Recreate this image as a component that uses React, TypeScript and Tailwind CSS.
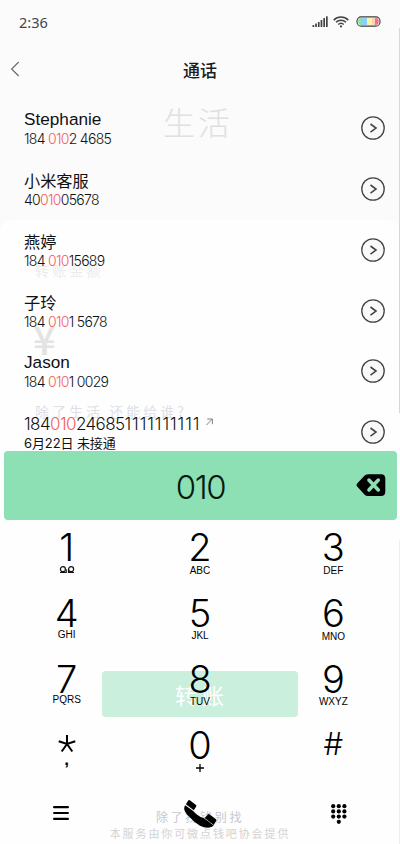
import type { ReactNode } from "react";

type Contact = {
  name: string;
  latin?: boolean;
  before: string;
  after: string;
};

const contacts: Contact[] = [
  { name: "Stephanie", latin: true, before: "184 ", after: "2 4685" },
  { name: "小米客服", before: "40", after: "05678" },
  { name: "燕婷", before: "184 ", after: "15689" },
  { name: "子玲", before: "184 ", after: "1 5678" },
  { name: "Jason", latin: true, before: "184 ", after: "1 0029" },
];

const digitFont = "font-['Inter','Noto_Sans_CJK_SC',sans-serif]";

function StatusBar() {
  return (
    <div className="flex h-11 items-center justify-between pl-[19px] pr-[19px]">
      <span className="font-['Noto_Sans',sans-serif] text-[14.5px] leading-5 text-[#444]">2:36</span>
      <div className="flex items-center">
        <svg width="16" height="12" viewBox="0 0 16 12" fill="#444">
          <rect x="0.5" y="9" width="1.7" height="2" />
          <rect x="3.2" y="7.5" width="1.7" height="3.5" />
          <rect x="5.9" y="6" width="1.7" height="5" />
          <rect x="8.6" y="4" width="1.7" height="7" />
          <rect x="11.3" y="2" width="1.7" height="9" />
          <rect x="14" y="0.3" width="1.7" height="10.7" />
        </svg>
        <svg className="ml-[5px]" width="16" height="12" viewBox="0 0 16 12" fill="none" stroke="#444" strokeWidth="1.5">
          <path d="M0.7 4.1C4.8 0.1 11.2 0.1 15.3 4.1" />
          <path d="M3 6.3c2.8-2.7 7.2-2.7 10 0" />
          <path d="M5.2 8.5c1.6-1.5 4-1.5 5.6 0" />
          <circle cx="8" cy="10.4" r="1.1" fill="#444" stroke="none" />
        </svg>
        <svg className="-mt-px ml-[7px]" width="25" height="11" viewBox="0 0 25 11">
          <defs>
            <clipPath id="cell">
              <rect x="2.2" y="2" width="20.5" height="7" rx="3" />
            </clipPath>
          </defs>
          <g clipPath="url(#cell)">
            <rect x="1" width="5" height="11" fill="#7fe89b" />
            <rect x="6" width="5" height="11" fill="#8fcdf5" />
            <rect x="11" width="5" height="11" fill="#f8f3ae" />
            <rect x="16" width="3" height="11" fill="#f9d6b8" />
            <rect x="19" width="5" height="11" fill="#f4718b" />
          </g>
          <rect x="1" y="0.9" width="23" height="9.2" rx="4.2" fill="none" stroke="#3c3c3c" strokeWidth="1.1" />
        </svg>
      </div>
    </div>
  );
}

function Header() {
  return (
    <div className="grid h-[54px] grid-cols-[40px_1fr_40px] items-center">
      <svg className="-mt-1 ml-2.5" width="10" height="16" viewBox="0 0 10 16" fill="none" stroke="#666" strokeWidth="1.1">
        <path d="M8.7 1 1.6 8l7.1 7" />
      </svg>
      <h1 className="-mt-0.5 text-center font-['Noto_Sans_CJK_SC',sans-serif] text-[17px] font-medium leading-6 text-[#1c1c1c]">通话</h1>
    </div>
  );
}

function MoreButton() {
  return (
    <button type="button" className="shrink-0">
      <svg width="24" height="24" viewBox="0 0 24 24" fill="none" stroke="#444">
        <circle cx="12" cy="12" r="11.2" strokeWidth="1.3" fill="#f9f9f9" />
        <path d="M9.5 8 15 12.1l-5.5 4.1" strokeWidth="1.6" />
      </svg>
    </button>
  );
}

function ContactRow({ name, latin, before, after }: Contact) {
  return (
    <div className="flex h-[60.75px] items-center justify-between pl-6 pr-[15px]">
      <div className="pt-0.5 text-[#111]">
        {latin ? (
          <p className="font-['Liberation_Sans',sans-serif] text-[17.2px] leading-5">{name}</p>
        ) : (
          <p className="font-['Noto_Sans_CJK_SC',sans-serif] text-[16.2px] leading-5">{name}</p>
        )}
        <p className={`${digitFont} whitespace-pre text-[14px] font-[350] leading-5 tracking-[-0.7px]`}>
          {before}
          <span className="text-[#f25f5f]">010</span>
          {after}
        </p>
      </div>
      <MoreButton />
    </div>
  );
}

function MissedRow() {
  return (
    <div className="flex h-[49px] items-start justify-between pl-6 pr-[15px] pt-3">
      <div className="text-[#111]">
        <p className={`${digitFont} flex text-[17px] font-[350] leading-5 tracking-[-0.6px]`}>
          184<span className="text-[#f25f5f]">010</span>24685<span className="tracking-[0.9px]">1111111111</span>
          <svg className="ml-1.5 mt-1" width="7" height="8" viewBox="0 0 7 8" fill="none" stroke="#777" strokeWidth="0.9">
            <path d="M0.5 7 6.3 1M1.2 1h5.2v5.2" />
          </svg>
        </p>
        <p className={`${digitFont} text-[13px] leading-[18px] tracking-[-0.1px]`}>6月22日 未接通</p>
      </div>
      <div className="pt-1.5">
        <MoreButton />
      </div>
    </div>
  );
}

function DialDisplay() {
  return (
    <div className="ml-1 mr-[3px] grid h-[69px] grid-cols-[60px_1fr_60px] items-center rounded-[4px] bg-[#8ce0b4]">
      <span />
      <span className={`${digitFont} pt-[3px] text-center text-[33px] font-light leading-10 tracking-[-1.5px] text-[#061a0e]`}>010</span>
      <svg className="ml-[19px]" width="30" height="24" viewBox="0 0 30 24">
        <path d="M1.2 10.5 8.4 2.7Q9.8 1.2 12 1.2h13q4.3 0 4.3 4.3v13q0 4.5-4.3 4.5H12q-2.2 0-3.6-1.5L1.2 13.5q-1.4-1.5 0-3z" fill="#000" />
        <path d="m12.9 7 9.4 10M22.3 7l-9.4 10" stroke="#8ce0b4" strokeWidth="3.5" strokeLinecap="round" />
      </svg>
    </div>
  );
}

function Key({ digit, children }: { digit: string; children: ReactNode }) {
  return (
    <button type="button" className="flex h-[66px] flex-col items-center pt-[7px] text-black">
      <span className={`${digitFont} text-[38px] font-light leading-10`}>{digit}</span>
      {children}
    </button>
  );
}

function Letters({ className, children }: { className: string; children: string }) {
  return <span className={`font-['Liberation_Sans',sans-serif] text-[10px] leading-3 ${className}`}>{children}</span>;
}

function Keypad() {
  return (
    <div className="grid grid-cols-3">
      <Key digit="1">
        <svg className="-mt-[1px]" width="16" height="8" viewBox="0 0 16 8" fill="none" stroke="#111" strokeWidth="1.2">
          <circle cx="3.9" cy="3.2" r="2.5" />
          <circle cx="12.1" cy="3.2" r="2.5" />
          <path d="M1 6.5h6.2V3.2M9.5 3.2v3.3H15" />
        </svg>
      </Key>
      <Key digit="2"><Letters className="-mt-0.5">ABC</Letters></Key>
      <Key digit="3"><Letters className="-mt-0.5">DEF</Letters></Key>
      <Key digit="4"><Letters className="-mt-1">GHI</Letters></Key>
      <Key digit="5"><Letters className="-mt-[3px]">JKL</Letters></Key>
      <Key digit="6"><Letters className="-mt-0.5">MNO</Letters></Key>
      <Key digit="7"><Letters className="-mt-[5px]">PQRS</Letters></Key>
      <Key digit="8"><Letters className="-mt-[3px]">TUV</Letters></Key>
      <Key digit="9"><Letters className="-mt-[3px]">WXYZ</Letters></Key>
      <div className="flex flex-col items-center pt-[17px]">
        <svg width="18" height="18" viewBox="0 0 18 18" fill="none" stroke="#000" strokeWidth="2">
          <path d="M9 0v9M.7 6.3 9 9l8.3-2.7M9 9 3.7 16.5M9 9l5.3 7.5" />
        </svg>
        <span className="-mt-px font-['Liberation_Sans',sans-serif] text-[17px] font-bold leading-4">,</span>
      </div>
      <Key digit="0">
        <svg className="-mt-px" width="8" height="8" viewBox="0 0 8 8" stroke="#000" strokeWidth="1.3">
          <path d="M4 0v8M0 4h8" />
        </svg>
      </Key>
      <div className="flex justify-center pt-1.5">
        <span className={`${digitFont} text-[31px] font-light leading-10`}>#</span>
      </div>
    </div>
  );
}

function BottomBar() {
  return (
    <div className="grid grid-cols-3 items-center pt-[14px]">
      <svg className="ml-[53px]" width="16" height="16" viewBox="0 0 16 16" stroke="#000" strokeWidth="2.2" strokeLinecap="round">
        <path d="M1.1 2.2h13.8M1.1 8h13.8M1.1 13.9h13.8" />
      </svg>
      <svg className="mx-auto" width="34" height="30" viewBox="-1 -1 34 30">
        <path d="M1.2 6.3 9.2 12q1.6 2 4 3.8 3.300 2.800 7.200 3.700l9.400 7q-1.800 1.700-4.200 2.100-5 .5-9.600-1.900-5.400-3-10-8.200Q.8 14 .2 10 0 7.800 1.200 6.300z" />
        <path d="M1.900 5.300 4.200 1.500q.7-.9 1.600-.3L12 6q.8.700.2 1.500l-2.400 3.800zM20.600 19l3.300-3.600q.7-.8 1.500-.2l6.600 5q.9.700.2 1.500L29.800 26z" />
      </svg>
      <svg className="ml-[64px] mt-[3px]" width="16" height="20" viewBox="0 0 16 20">
        {[2.2, 7.8, 13.4].map((x) => [2.2, 7.4, 12.6].map((y) => <circle key={`${x}-${y}`} cx={x} cy={y} r="2.1" />))}
        <circle cx="7.8" cy="17.8" r="2.1" />
      </svg>
    </div>
  );
}

// Transfer page showing faintly behind the dialer
function TransferBackdrop() {
  return (
    <div className="absolute inset-0 bg-[#fbfbfb] pt-[103px] font-['Noto_Sans_CJK_SC',sans-serif]" aria-hidden>
      <p className="h-9 pl-[163px] text-[32px] font-light leading-9 tracking-[3px] text-[#e0e0e0]">生活</p>
      <div className="mt-[81px] h-[624px] rounded-t-xl bg-[#fefefe] pt-10">
        <p className="pl-[35px] text-[14px] leading-5 tracking-[3.2px] text-[#ececec]">转账金额</p>
        <p className="mt-[38px] pl-[33px] text-[40px] font-medium leading-10 text-[#e3e3e3]">¥</p>
        <p className="mt-[43px] pl-[35px] text-[14px] leading-5 tracking-[3px] text-[#dde1e6]">除了生活 还能给谁?</p>
        <div className="mx-auto mt-[250px] h-[46px] w-[196px] rounded bg-[#caf0dd] pl-1 text-center text-[22px] leading-[46px] tracking-[5px] text-white">转账</div>
        <p className="mt-[92px] text-center text-[12px] leading-4 tracking-[2.7px] text-[#c4c8ce]">除了找钱别找</p>
        <p className="text-center text-[11px] leading-4 tracking-[1.9px] text-[#d3d3d3]">本服务由你可微点钱吧协会提供</p>
      </div>
    </div>
  );
}

export default function App() {
  return (
    <div className="relative h-[844px] w-[400px] overflow-hidden">
      <TransferBackdrop />
      <div className="relative">
        <StatusBar />
        <Header />
        {contacts.map((contact) => (
          <ContactRow key={contact.name} {...contact} />
        ))}
        <MissedRow />
        <DialDisplay />
        <Keypad />
        <BottomBar />
      </div>
      <div className="absolute right-0 top-7 h-[385px] w-px bg-[#d8d8d8]" />
      <div className="absolute bottom-0 right-0 top-[540px] w-px bg-[#ededed]" />
    </div>
  );
}
